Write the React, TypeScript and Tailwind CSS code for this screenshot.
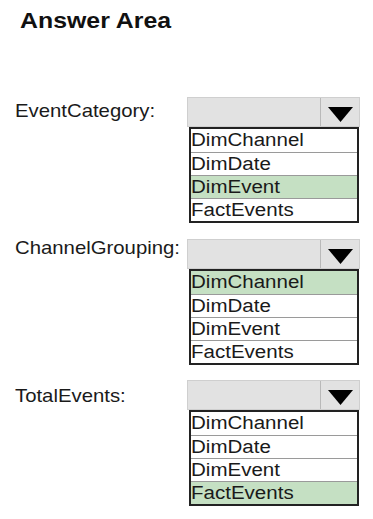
const OPTIONS = ["DimChannel", "DimDate", "DimEvent", "FactEvents"];

type Row = { label: string; picked: string; labelTop: string; top: string };

const ROWS: Row[] = [
  { label: "EventCategory:", picked: "DimEvent", labelTop: "mt-[2px]", top: "mt-[63px]" },
  { label: "ChannelGrouping:", picked: "DimChannel", labelTop: "-mt-[3px]", top: "mt-[16px]" },
  { label: "TotalEvents:", picked: "FactEvents", labelTop: "mt-[4px]", top: "mt-[15px]" },
];

function Dropdown({ picked }: { picked: string }) {
  return (
    <div className="w-[173px]">
      {/* closed combo box */}
      <div className="flex h-[30px] border border-[#cfcfcf] bg-[#e2e2e2]">
        <div className="flex-1" />
        <div className="flex w-[39px] items-start justify-center border-l border-[#b9b9b9] pt-[9px]">
          <svg width="25" height="15" viewBox="0 0 25 15">
            <path d="M0 0 L25 0 L12.5 15 Z" fill="#000" />
          </svg>
        </div>
      </div>
      {/* open list */}
      <div className="ml-[2px] w-[170px] border-2 border-[#222]">
        {OPTIONS.map((o, i) => (
          <div
            key={o}
            className={
              "h-[23px] overflow-hidden " +
              (i > 0 ? "border-t border-[#9a9a9a] " : "") +
              (o === picked ? "bg-[#c5e0c3]" : "bg-white")
            }
          >
            <span className="inline-block origin-left scale-x-[1.14] text-[18px] leading-[21px] text-[#1a1a1a]">
              {o}
            </span>
          </div>
        ))}
      </div>
    </div>
  );
}

export default function App() {
  return (
    <div
      className="h-[519px] w-[373px] overflow-hidden bg-white"
      style={{ fontFamily: '"Liberation Sans", Arial, sans-serif' }}
    >
      <h1 className="pl-[20px] pt-2 text-[22px] font-bold leading-[26px] text-[#111]">
        <span className="inline-block origin-left scale-x-[1.13]">Answer Area</span>
      </h1>

      {ROWS.map((r) => (
        <div key={r.label} className={"flex " + r.top}>
          <div className={"w-[187px] pl-[15px] " + r.labelTop}>
            <span className="inline-block origin-left scale-x-[1.07] text-[19px] leading-[24px] text-[#1a1a1a]">
              {r.label}
            </span>
          </div>
          <Dropdown picked={r.picked} />
        </div>
      ))}
    </div>
  );
}
